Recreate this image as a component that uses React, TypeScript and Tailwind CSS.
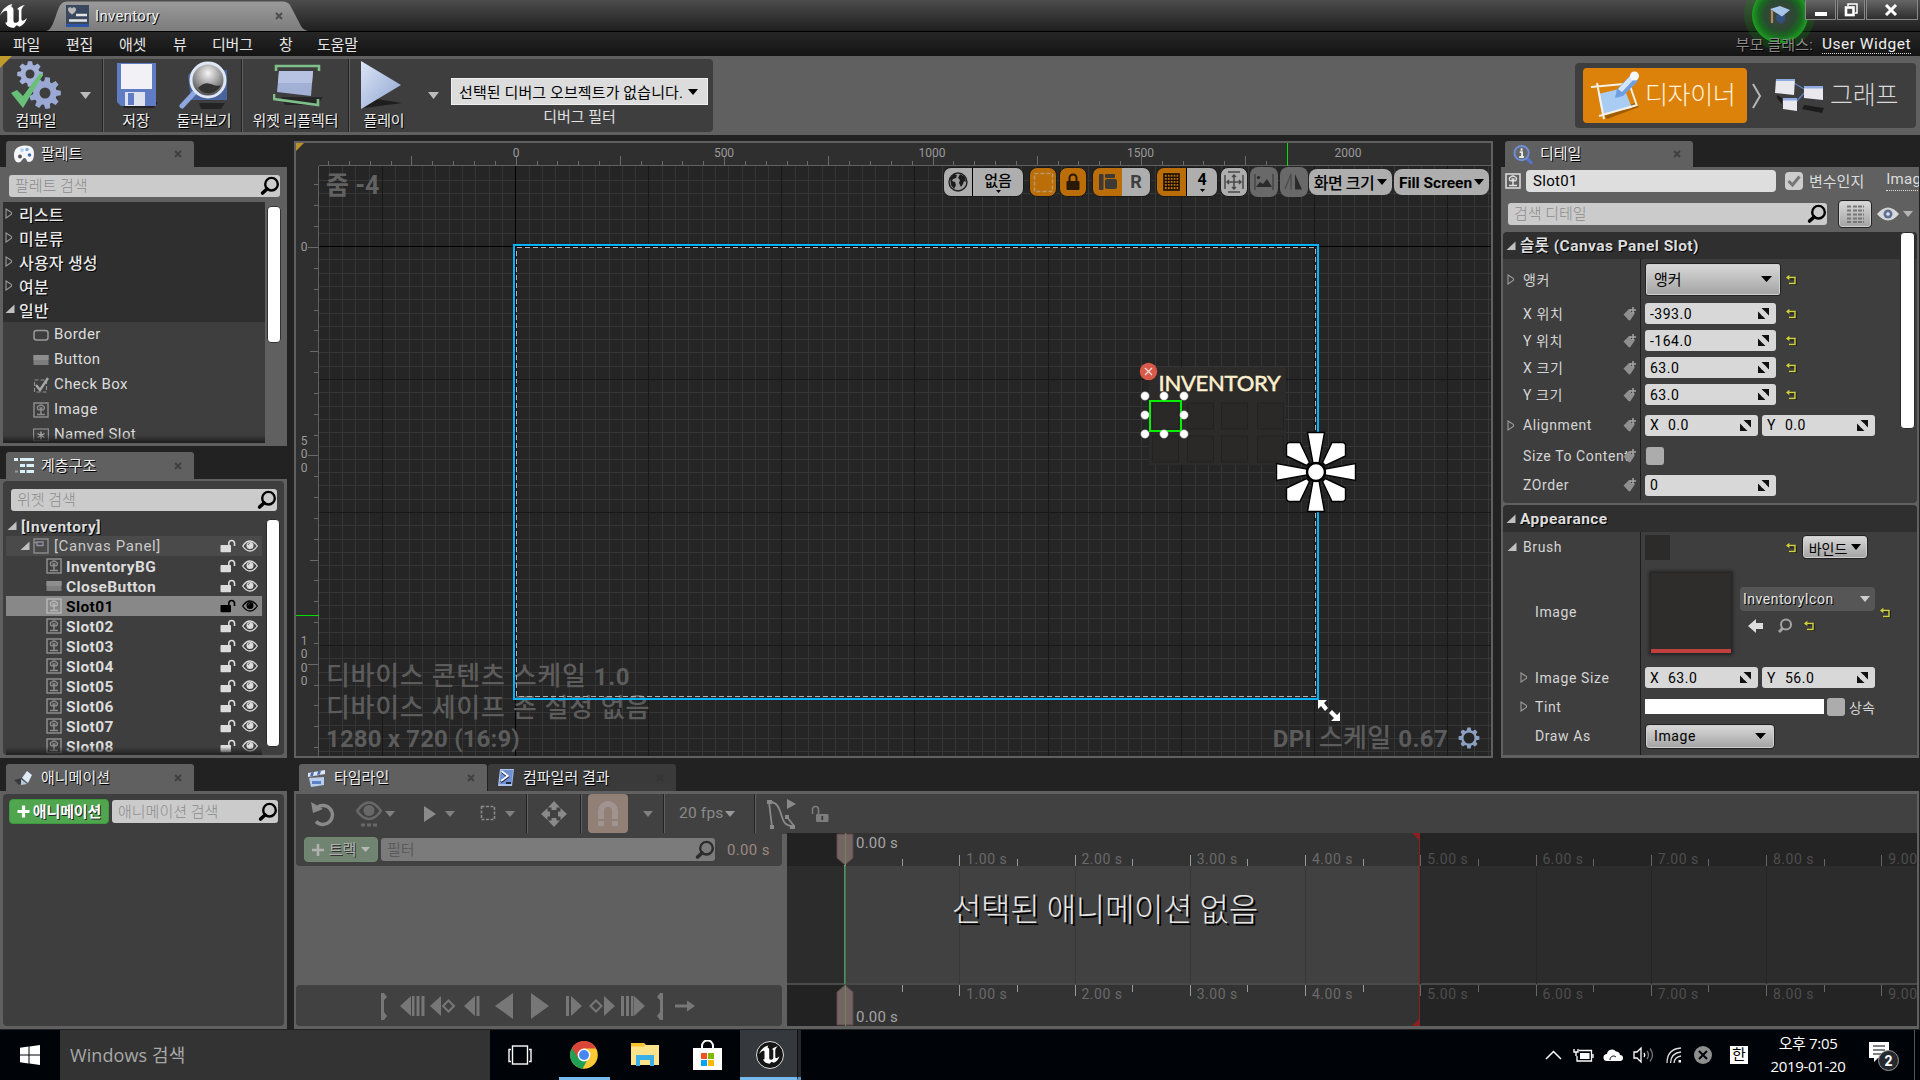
import React from "react";

const SHADOW = "[text-shadow:1px_1px_0_#000]";

/* ---------- small shared pieces ---------- */

function Caret({ className = "text-[#bbb]", w = 10, h = 6 }: { className?: string; w?: number; h?: number }) {
  return (
    <svg width={w} height={h} viewBox="0 0 10 6" preserveAspectRatio="none" className={"shrink-0 " + className}>
      <path d="M0 0h10L5 6z" fill="currentColor" />
    </svg>
  );
}

function SearchIcon({ className = "text-black", size = 20 }: { className?: string; size?: number }) {
  return (
    <svg width={size} height={size} viewBox="0 0 20 20" className={"shrink-0 " + className}>
      <circle cx="11.5" cy="8.2" r="6.3" fill="none" stroke="currentColor" strokeWidth="2.4" />
      <path d="M7 13L2.6 17" stroke="currentColor" strokeWidth="3.6" strokeLinecap="round" />
    </svg>
  );
}

function Search({ text, className }: { text: string; className: string }) {
  return (
    <div className={"flex shrink-0 items-center justify-between rounded-[3px] bg-[#cbcbcb] pl-1.5 pr-0 text-[15px] leading-none text-[#8c8c8c] " + className}>
      <span className="whitespace-nowrap pt-px font-light">{text}</span>
      <SearchIcon />
    </div>
  );
}

function Expander({ open = false }: { open?: boolean }) {
  return open ? (
    <svg width="10" height="10" viewBox="0 0 10 10" className="shrink-0">
      <path d="M9.5 0.5V9H0.5z" fill="#c0c0c0" />
    </svg>
  ) : (
    <svg width="8" height="11" viewBox="0 0 8 11" className="shrink-0">
      <path d="M1 1L6.5 4.6V6.2L1 10z" fill="none" stroke="#9a9a9a" strokeWidth="1.1" />
    </svg>
  );
}

function PanelTab({ icon, label, className = "bg-[#606060]" }: { icon: React.ReactNode; label: string; className?: string }) {
  return (
    <div className={"flex h-full w-[188px] shrink-0 items-center rounded-t-[3px] pl-2 pr-3 " + className}>
      <div className="flex w-5 justify-center">{icon}</div>
      <span className={"ml-[7px] whitespace-nowrap pt-px text-[15px] leading-none text-[#eee] " + SHADOW}>{label}</span>
      <CloseX className="ml-auto" />
    </div>
  );
}

function CloseX({ className = "" }: { className?: string }) {
  return (
    <svg width="8" height="8" viewBox="0 0 8 8" className={className}>
      <path d="M1 1l6 6M7 1l-6 6" stroke="#333" strokeWidth="2" opacity="0.7" />
    </svg>
  );
}

function ImageGlyph({ color = "#8d8d8d" }: { color?: string }) {
  return (
    <svg width="16" height="16" viewBox="0 0 16 16" className="shrink-0">
      <rect x="1" y="1" width="14" height="14" fill="none" stroke={color} strokeWidth="1.5" />
      <path d="M4.5 6.2a1.7 1.7 0 0 1 1.6-2.3 2.5 2.5 0 0 1 3.8 0 1.7 1.7 0 0 1 1.3 2.6 1.5 1.5 0 0 1-2 1.3H6.4a1.5 1.5 0 0 1-1.9-1.6z" fill="none" stroke={color} strokeWidth="1.4" />
      <path d="M6.500 6h3M8 6v6M4 12.5h8" stroke={color} strokeWidth="1.5" />
    </svg>
  );
}

function ButtonGlyph() {
  return (
    <svg width="16" height="16" viewBox="0 0 16 16" className="shrink-0">
      <rect x="0.5" y="3" width="15" height="10" fill="#7d7d7d" />
      <rect x="0.5" y="3" width="15" height="5" fill="#8e8e8e" />
    </svg>
  );
}

function LockOpen({ color }: { color: string }) {
  return (
    <svg width="16" height="14" viewBox="0 0 16 14" className="shrink-0">
      <rect x="0.5" y="6" width="10.5" height="7.2" rx="0.8" fill={color} />
      <path d="M8.8 6V3.8a2.9 2.9 0 0 1 5.7 0V7" fill="none" stroke={color} strokeWidth="1.6" />
    </svg>
  );
}

function Eye({ color }: { color: string }) {
  return (
    <svg width="16" height="12" viewBox="0 0 16 12" className="shrink-0">
      <path d="M0.7 6C3 2.6 5.4 1 8 1s5 1.6 7.3 5C13 9.4 10.6 11 8 11S3 9.4 0.7 6z" fill="none" stroke={color} strokeWidth="1.3" />
      <circle cx="8" cy="5.4" r="3.5" fill={color} />
      <path d="M6.2 5a2 2 0 0 1 1.6-1.7" stroke="#555" strokeWidth="0.9" fill="none" />
    </svg>
  );
}

function ResetArrow({ className = "" }: { className?: string }) {
  return (
    <svg width="11" height="11" viewBox="0 0 11 11" className={"shrink-0 " + className}>
      <path d="M1.5 4.6H9.8V10.6H3.4" fill="none" stroke="#111" strokeWidth="1.6" />
      <path d="M1 3.6H9V9.4H3" fill="none" stroke="#cfd03a" strokeWidth="1.5" />
      <path d="M0 3.6L3.4 0.8V6.2z" fill="#cfd03a" />
    </svg>
  );
}

/* ---------- title bar, menu, toolbar ---------- */

function UnrealMark({ size, className = "" }: { size: number; className?: string }) {
  return (
    <svg width={size} height={size} viewBox="0 0 28 28" className={className}>
      <path
        d="M13 2C8 3 3 7 1 13c2-3 4-4.500 5.500-4.500 1 0 1.500.6 1.500 1.800V18c0 1.600-.8 2-2 1.500C7 23 10.500 25 14.500 25l2.500-2.500L20 24c4-2 6-5 7-8.500-1.500 1.600-3 2.500-4 2.500s-1.300-.7-1.300-2V8.500c0-2 1.300-4 3.300-5.500-3 .6-6 2-7.500 4 1-.2 1.700.4 1.700 1.500V18c-1 1.300-2 2-3.200 2s-2-.8-2-2.200V7.500C14 6 13.500 5 12 4.800 12 3.800 12.300 2.800 13 2z"
        transform="translate(-1 0)"
        fill="#fff"
      />
    </svg>
  );
}

function TitleBar() {
  return (
    <div className="relative flex h-8 shrink-0 border-b border-black bg-[linear-gradient(180deg,#4c4c4c_0%,#3a3a3a_40%,#1f1f1f_100%)]">
      <UnrealMark size={29} className="mt-0.5" />
      <div className="relative ml-[17px] mt-px h-[30px] w-[262px]">
        <svg width="262" height="30" viewBox="0 0 262 30" className="absolute inset-0">
          <defs>
            <linearGradient id="tab" x1="0" y1="0" x2="0" y2="1">
              <stop offset="0" stopColor="#9a9a9a" />
              <stop offset="1" stopColor="#7c7c7c" />
            </linearGradient>
          </defs>
          <path d="M0 30C9 29 10 5 17 1.500Q19 .5 22 .5H236Q242 .5 244 4L255 25Q257 29 262 30z" fill="url(#tab)" />
        </svg>
        <div className="relative flex h-full items-center pl-[20px]">
          <svg width="23" height="22" viewBox="0 0 23 22">
            <rect width="23" height="22" fill="#39475f" />
            <rect y="19" width="23" height="3" fill="#2c55a5" />
            <path d="M2 4.500C2 2 5 1.500 6 3.800 7 1.500 10 2 10 4.500 10 7 6 9.500 6 9.500S2 7 2 4.500z" fill="#b9b9b9" />
            <path d="M10 10h11M3 15.500h18" stroke="#e4e4e4" strokeWidth="2.600" />
          </svg>
          <span className={"ml-1.5 text-[15px] leading-none tracking-[0.300px] text-[#eee] " + SHADOW}>Inventory</span>
          <CloseX className="absolute left-[229px] top-[11px]" />
        </div>
      </div>
      <div className="absolute left-[1744px] top-0 h-[52px] w-[71px] overflow-hidden">
        <div className="absolute -top-[21px] left-0 size-[71px] rounded-full bg-[#00a000]/20" />
        <div className="absolute -top-[13px] left-2 size-[56px] rounded-full border border-[#1fa01f] bg-[radial-gradient(circle,#3c443e_15%,#2a4a30_40%,#1a6a20_56%,#1c9422_70%)]" />
        <svg width="22" height="20" viewBox="0 0 22 20" className="absolute left-[25px] top-[5px]">
          <path d="M7 10v5l5 4 4-3.500V9z" fill="#34507c" />
          <path d="M1 4L11 1l10 4-8 6.500z" fill="#a8c6ea" />
          <path d="M3 5v13" stroke="#b08a58" strokeWidth="2.200" />
        </svg>
      </div>
      <div className="absolute right-[2px] top-0 flex h-[20px] gap-px">
        <div className="flex w-[31px] items-center justify-center border border-t-0 border-[#888] bg-[linear-gradient(#666,#2e2e2e)]">
          <div className="mt-2 h-1 w-3 bg-white" />
        </div>
        <div className="flex w-[28px] items-center justify-center border border-t-0 border-[#888] bg-[linear-gradient(#666,#2e2e2e)]">
          <svg width="14" height="14" viewBox="0 0 14 14">
            <path d="M4 3V1h9v9h-2" fill="none" stroke="#fff" strokeWidth="1.500" />
            <rect x="2" y="4.500" width="7.500" height="7.500" fill="none" stroke="#fff" strokeWidth="2.600" />
          </svg>
        </div>
        <div className="flex w-[52px] items-center justify-center border border-t-0 border-[#888] bg-[linear-gradient(#666,#2e2e2e)]">
          <svg width="14" height="12" viewBox="0 0 14 12" className="mr-0.5">
            <path d="M2 1l10 10M12 1L2 11" stroke="#fff" strokeWidth="3" />
          </svg>
        </div>
      </div>
    </div>
  );
}

function MenuBar() {
  return (
    <div className="flex h-6 shrink-0 items-center bg-[linear-gradient(#262626,#141414)] pl-[13px] pr-[9px] pt-0.5 text-[15px] leading-none tracking-[-0.2px] text-[#e6e6e6]">
      <span className="w-[53px]">파일</span>
      <span className="w-[53px]">편집</span>
      <span className="w-[54px]">애셋</span>
      <span className="w-[39px]">뷰</span>
      <span className="w-[67px]">디버그</span>
      <span className="w-[38px]">창</span>
      <span>도움말</span>
      <span className={"relative z-10 ml-auto mr-[9px] tracking-[0.1px] text-[#8a8a8a] " + SHADOW}>부모 클래스:</span>
      <span className="border-b border-dotted border-[#ddd] text-[15.500px] leading-[17px] tracking-[0.500px] text-[#eee]">User Widget</span>
    </div>
  );
}

const gear = (cx: number, cy: number, r: number, teeth: number) => {
  const pts: string[] = [];
  for (let i = 0; i < teeth; i++) {
    const a = (i / teeth) * Math.PI * 2;
    const s = Math.PI / teeth;
    [[-0.75, 0.74], [-0.42, 1], [0.42, 1], [0.75, 0.74]].forEach(([k, m]) => {
      pts.push((cx + Math.cos(a + s * k) * r * m).toFixed(1) + "," + (cy + Math.sin(a + s * k) * r * m).toFixed(1));
    });
  }
  return pts.join(" ");
};

function ToolItem({ label, className, children }: { label: string; className: string; children: React.ReactNode }) {
  return (
    <div className={"flex shrink-0 flex-col items-center " + className}>
      <div className="flex h-[52px] items-center">{children}</div>
      <span className={"mt-[3px] whitespace-nowrap text-[15px] leading-none tracking-[-0.1px] text-[#eee] " + SHADOW}>{label}</span>
    </div>
  );
}

function Sep({ className = "" }: { className?: string }) {
  return <div className={"h-full w-0.5 shrink-0 border-l border-[#222] bg-[#606060] " + className} />;
}

function Toolbar() {
  return (
    <div className="flex h-[79px] shrink-0 bg-[#606060]">
      <div className="relative mt-[3px] h-[73px] w-[713px] pl-[3px]">
        <svg width="12" height="12" className="absolute left-0 -top-[3px] z-10">
          <path d="M0 0h12L0 12z" fill="#c09a2a" />
        </svg>
        <div className="flex h-full rounded-[4px] bg-[#3e3e3e]">
          <ToolItem label="컴파일" className="w-[66px]">
            <svg width="50" height="50" viewBox="0 0 50 50">
              <polygon points={gear(19, 14, 13, 8)} fill="#a3b0d8" />
              <circle cx="19" cy="14" r="4.500" fill="#3e3e3e" />
              <polygon points={gear(34, 33, 16, 9)} fill="#9aa8d4" />
              <circle cx="34" cy="33" r="5.500" fill="#3e3e3e" />
              <path d="M0 33l6-3 6 6L29 13l3 2-20 33z" fill="#68c078" />
            </svg>
          </ToolItem>
          <div className="mt-[33px] w-[33px] pl-[11px]"><Caret w={11} h={7} /></div>
          <Sep />
          <ToolItem label="저장" className="w-[63px] pl-px">
            <svg width="44" height="46" viewBox="0 0 44 46" className="ml-[3px]">
              <path d="M6 40h36l-4 6H8z" fill="#222" />
              <path d="M1 1h39v43H5L1 40z" fill="#5f7cc4" />
              <rect x="5" y="2" width="31" height="25" fill="#f2f2f6" />
              <rect x="9" y="30" width="20" height="14" fill="#dfe3ee" />
              <rect x="12" y="31" width="6" height="12" fill="#5f7cc4" />
            </svg>
          </ToolItem>
          <ToolItem label="둘러보기" className="w-[74px]">
            <svg width="50" height="48" viewBox="0 0 50 48">
              <defs>
                <radialGradient id="lens" cx="0.500" cy="0.300" r="0.700">
                  <stop offset="0" stopColor="#f5f5f5" />
                  <stop offset="0.600" stopColor="#8d8d8d" />
                  <stop offset="1" stopColor="#444" />
                </radialGradient>
              </defs>
              <path d="M20 42h26l-4 6H22z" fill="#242424" />
              <path d="M9 14l6-5h33v30H12z" fill="#49639d" />
              <path d="M16 31L3 45" stroke="#8fa7e0" strokeWidth="5" strokeLinecap="round" />
              <circle cx="29" cy="19" r="17" fill="url(#lens)" stroke="#dfe6f5" strokeWidth="3" />
              <path d="M19 27c6 8 18 7 23-3-8 4-12-8-23 3z" fill="#333" />
            </svg>
          </ToolItem>
          <Sep />
          <ToolItem label="위젯 리플렉터" className="w-[105px]">
            <svg width="50" height="44" viewBox="0 0 50 44" className="ml-1">
              <path d="M8 34h42l-6 8H12z" fill="#262626" />
              <path d="M3 8V3h43v5M1 31l0 5 44 6v-6" fill="none" stroke="#7fbf8a" strokeWidth="2.600" />
              <path d="M6 8l34 0-2 25-34-4z" fill="#a3b0d6" />
              <path d="M6 8l34 0-1 12-34 0z" fill="#b7c2e2" />
            </svg>
          </ToolItem>
          <Sep />
          <ToolItem label="플레이" className="w-[67px] pl-px">
            <svg width="46" height="50" viewBox="0 0 46 50" className="mr-[7px]">
              <path d="M6 48l12-9 26 4z" fill="#1e1e1e" />
              <defs>
                <linearGradient id="play" x1="0" y1="0" x2="1" y2="1">
                  <stop offset="0" stopColor="#dbe6f7" />
                  <stop offset="1" stopColor="#8fa3cf" />
                </linearGradient>
              </defs>
              <path d="M3 1l40 24L3 49z" fill="url(#play)" />
            </svg>
          </ToolItem>
          <div className="mt-[33px] w-[33px] pl-[11px]"><Caret w={11} h={7} /></div>
          <div className="ml-px flex w-[257px] flex-col items-center pt-[19px]">
            <div className="flex h-[27px] w-full items-center justify-between border border-[#efefef] bg-[#dcdcdc] pl-[7px] pr-[9px] text-[15px] leading-none tracking-[0.1px] text-black">
              <span className="whitespace-nowrap pt-[3px]">선택된 디버그 오브젝트가 없습니다.</span>
              <Caret className="text-black" />
            </div>
            <span className="mt-[5px] text-[15px] leading-none text-[#e0e0e0]">디버그 필터</span>
          </div>
        </div>
      </div>
      <div className="ml-auto mr-1 mt-[7px] flex h-[65px] w-[341px] items-center rounded-[4px] bg-[#3e3e3e] pl-2">
        <div className="flex h-[55px] w-[164px] items-center rounded-sm bg-[#dc820b] pl-1.5">
          <svg width="52" height="50" viewBox="0 0 52 50">
            <path d="M14 44l32-12 4 4-32 12z" fill="#a05c00" />
            <path d="M9 23l26-6 8 20-30 6z" fill="#a9cdf2" />
            <path d="M2 16l44-4M8 12l7 36M10 45l38-11M40 12l8 23" fill="none" stroke="#f6f1e6" strokeWidth="2" />
            <path d="M26 27l2-9L42 4l7 6-15 15z" fill="#6f9ee2" />
            <path d="M29 18L43 3l4 3-14 15z" fill="#d4e6fb" />
            <circle cx="45.500" cy="5" r="4.500" fill="#f4f8ff" />
          </svg>
          <span className="ml-1 whitespace-nowrap text-[25px] font-light leading-none tracking-[-0.400px] text-[#fff3df]">디자이너</span>
        </div>
        <svg width="12" height="26" viewBox="0 0 12 26" className="ml-1">
          <path d="M2 1l7 12-7 12" fill="none" stroke="#b8b8b8" strokeWidth="2" />
        </svg>
        <svg width="52" height="36" viewBox="0 0 52 36" className="ml-[11px]">
          <path d="M30 27l20 3-2 5-20-4zM3 17l5 3v6l-5-6z" fill="#1c1c1c" />
          <path d="M20 5l10 6M22 24l9-10" stroke="#5c7fc0" strokeWidth="1.400" />
          <path d="M2 1h19l-1 16-19-2zM30 9h19v13l-19-2zM9 20l14 0 0 13-14-2z" fill="#e8e8ee" />
          <path d="M2 1h19v2H2zM30 8h19v2.500H30zM9 20h14v2.500H9z" fill="#8fabe0" />
        </svg>
        <span className="ml-1 whitespace-nowrap text-[25px] font-light leading-none tracking-[-0.200px] text-[#d8d8d8]">그래프</span>
      </div>
    </div>
  );
}

/* ---------- left column ---------- */

function PaletteGlyph() {
  return (
    <svg width="20" height="18" viewBox="0 0 20 18">
      <path d="M0 10C0 4 4 .5 11 .5s9 3 9 8.500c0 5-2 8-5 8S13 13 10.500 13 8 17.500 4.500 17.500C1.500 17.500 0 14 0 10z" fill="#f4f6fa" />
      <circle cx="6" cy="11.500" r="2" fill="#555" />
      <circle cx="8" cy="5" r="2" fill="#b9d4f2" />
      <circle cx="13" cy="4.500" r="1.800" fill="#7faee6" />
      <circle cx="15.500" cy="10" r="1.800" fill="#3f6fae" />
    </svg>
  );
}

function PaletteItem({ icon, label }: { icon: React.ReactNode; label: string }) {
  return (
    <div className="flex h-[25px] shrink-0 items-center gap-[5px] pl-[30px] text-[15px] tracking-[0.400px] text-[#dcdcdc]">
      {icon}
      <span>{label}</span>
    </div>
  );
}

function Palette() {
  return (
    <>
      <div className="flex h-[26px] shrink-0 pl-1.5">
        <PanelTab icon={<PaletteGlyph />} label="팔레트" />
      </div>
      <div className="flex h-[279px] shrink-0 flex-col bg-[#606060] px-[3px] pb-[3px] pt-2">
        <Search text="팔레트 검색" className="ml-[6px] h-[22px] w-[271px]" />
        <div className="mt-[5px] flex min-h-0 flex-1">
          <div className="relative w-[262px] overflow-hidden bg-[#3e3e3e]">
            <div className="bg-[#2f2f2f]">
              {["리스트", "미분류", "사용자 생성", "여분", "일반"].map((t, i) => (
                <div key={t} className="flex h-6 items-center">
                  <div className="-mt-0.5 flex w-4 pl-[2px]"><Expander open={i === 4} /></div>
                  <span className={"pt-[3px] text-[16px] font-medium leading-none tracking-[0.200px] text-[#e8e8e8] " + SHADOW}>{t}</span>
                </div>
              ))}
            </div>
            <PaletteItem
              label="Border"
              icon={<svg width="16" height="16" viewBox="0 0 16 16"><rect x="1" y="3.500" width="14" height="9.500" rx="2.500" fill="none" stroke="#9a9a9a" strokeWidth="1.500" /></svg>}
            />
            <PaletteItem label="Button" icon={<ButtonGlyph />} />
            <PaletteItem
              label="Check Box"
              icon={
                <svg width="16" height="16" viewBox="0 0 16 16">
                  <rect x="1.500" y="3" width="12" height="12" fill="none" stroke="#8d8d8d" strokeWidth="1.200" strokeDasharray="4 2" />
                  <path d="M3 8l4 5 8-12" fill="none" stroke="#a8a8a8" strokeWidth="2.300" />
                </svg>
              }
            />
            <PaletteItem label="Image" icon={<ImageGlyph />} />
            <PaletteItem
              label="Named Slot"
              icon={
                <svg width="16" height="16" viewBox="0 0 16 16">
                  <rect x="0.600" y="2" width="14.800" height="12" fill="none" stroke="#8d8d8d" strokeWidth="1.200" />
                  <path d="M8 4.500v8M4.500 6.500l7 4M11.500 6.500l-7 4" stroke="#a8a8a8" strokeWidth="1.400" />
                </svg>
              }
            />
            <div className="absolute inset-x-0 bottom-0 h-2 bg-[linear-gradient(transparent,#1c1c1c)]" />
          </div>
          <div className="ml-[2px] mt-1 h-[137px] w-[14px] rounded-sm border border-[#333] bg-white" />
        </div>
      </div>
    </>
  );
}

function TreeRow({ name, selected = false, glyph }: { name: string; selected?: boolean; glyph?: React.ReactNode }) {
  const c = selected ? "#000" : "#dcdcdc";
  return (
    <div className={"flex h-5 shrink-0 items-center pl-10 " + (selected ? "bg-[#888] text-black" : "text-[#dcdcdc]")}>
      {glyph ?? <ImageGlyph color={selected ? "#b5b5b5" : "#8d8d8d"} />}
      <span className="ml-1 flex-1 pt-[3px] text-[15.500px] font-bold leading-none tracking-[0.400px]">{name}</span>
      <LockOpen color={c} />
      <div className="ml-1.5 mr-1"><Eye color={c} /></div>
    </div>
  );
}

function Hierarchy() {
  return (
    <>
      <div className="mt-1.5 flex h-[27px] shrink-0 pl-1.5">
        <PanelTab
          label="계층구조"
          icon={
            <svg width="20" height="17" viewBox="0 0 20 17">
              <path d="M0 2.500h4M6 2.500h14M6 8.500h5M12.500 8.500H20M6 14.500h5M12.500 14.500H20" stroke="#d9f0f6" strokeWidth="3" />
              <path d="M1 14.500h3" stroke="#999" strokeWidth="2" />
            </svg>
          }
        />
      </div>
      <div className="h-[279px] shrink-0 bg-[#606060] px-[3px] pb-[3px] pt-0.5">
        <div className="flex h-full flex-col rounded bg-[#3e3e3e] pt-2">
          <Search text="위젯 검색" className="ml-[8px] h-[22px] w-[266px]" />
          <div className="flex min-h-0 flex-1 pl-[3px] pt-[5px]">
            <div className="relative flex w-[256px] flex-col overflow-hidden">
              <div className="flex h-5 shrink-0 items-center pl-px">
                <Expander open />
                <span className={"ml-1 pt-[3px] text-[15.500px] font-bold leading-none tracking-[0.550px] text-[#dedede] " + SHADOW}>[Inventory]</span>
              </div>
              <div className="flex h-5 shrink-0 items-center bg-[#4a4a4a] pl-[14px]">
                <Expander open />
                <svg width="16" height="16" viewBox="0 0 16 16" className="ml-[3px]">
                  <rect x="1" y="1" width="14" height="14" fill="none" stroke="#8d8d8d" strokeWidth="1.400" />
                  <path d="M1 4.500h3M4 4h6v3.500H4z" fill="none" stroke="#8d8d9d" strokeWidth="1.400" />
                </svg>
                <span className="ml-[5px] flex-1 text-[15px] leading-none tracking-[0.600px] text-[#c9c9c9]">[Canvas Panel]</span>
                <LockOpen color="#dcdcdc" />
                <div className="ml-1.5 mr-1"><Eye color="#dcdcdc" /></div>
              </div>
              <TreeRow name="InventoryBG" />
              <TreeRow name="CloseButton" glyph={<ButtonGlyph />} />
              <TreeRow name="Slot01" selected />
              <TreeRow name="Slot02" />
              <TreeRow name="Slot03" />
              <TreeRow name="Slot04" />
              <TreeRow name="Slot05" />
              <TreeRow name="Slot06" />
              <TreeRow name="Slot07" />
              <TreeRow name="Slot08" />
              <div className="absolute inset-x-0 bottom-0 h-2 bg-[linear-gradient(transparent,#222)]" />
            </div>
            <div className="ml-1 mt-[3px] h-[228px] w-[14px] rounded-sm border border-[#2a2a2a] bg-white" />
          </div>
        </div>
      </div>
    </>
  );
}

/* ---------- designer canvas ---------- */

const range = (n: number, from = 0) => Array.from({ length: n }, (_, i) => i + from);

/* Coordinates below are relative to the canvas frame's inner box. */
function Grid() {
  return (
    <svg width="1196" height="613" className="absolute inset-0">
      <rect width="1196" height="613" fill="#2f2f2f" />
      <rect x="23" y="23" width="1173" height="590" fill="#252525" />
      <g shapeRendering="crispEdges">
        {range(89, -14).map((i) => {
          const x = Math.round(219.3 + i * 13.32);
          return x > 23 && i % 10 !== 0 ? <path key={"x" + i} d={`M${x}.5 23V613`} stroke="#363636" /> : null;
        })}
        {range(45, -5).map((i) => {
          const y = Math.round(103 + i * 13.3);
          return y > 23 && i % 10 !== 0 ? <path key={"y" + i} d={`M23 ${y}.5H1196`} stroke="#363636" /> : null;
        })}
        {range(9, -1).map((i) => (
          <path key={"mx" + i} d={`M${Math.round(218.700 + i * 133.2)}.5 23V613`} stroke={i === 0 ? "#000" : "#171717"} />
        ))}
        {range(4).map((i) => (
          <path key={"my" + i} d={`M23 ${Math.round(103 + i * 133)}.5H1196`} stroke={i === 0 ? "#000" : "#171717"} />
        ))}
        <path d="M23 22.500H1196M22.500 23V613" stroke="#606060" />
        {range(47, -9).map((i) => {
          const x = Math.round(219.700 + i * 20.84);
          const h = i % 5 === 0 ? 9 : 4;
          return x > 23 ? <path key={"tx" + i} d={`M${x}.5 ${22 - h}V22`} stroke="#6a6a6a" /> : null;
        })}
        {range(28, -3).map((i) => {
          const y = Math.round(104 + i * 20.84);
          const w = i % 10 === 0 ? 10 : i % 5 === 0 ? 8 : 4;
          return y > 23 ? <path key={"ty" + i} d={`M${22 - w} ${y}.5H22`} stroke="#6a6a6a" /> : null;
        })}
        <path d="M991.500 0V23" stroke="#00e000" />
        <path d="M0 472.500H23" stroke="#00e000" />
      </g>
    </svg>
  );
}

function Overlay() {
  return (
    <svg width="1196" height="613" className="absolute inset-0">
      <rect x="220.500" y="104.500" width="799" height="449" fill="none" stroke="#b0b0b0" strokeDasharray="5 3" shapeRendering="crispEdges" />
      <rect x="218" y="102" width="804" height="454" fill="none" stroke="#00b4f8" strokeWidth="2" shapeRendering="crispEdges" />
      <rect x="853" y="224" width="137" height="98" fill="#2d2b29" />
      {[259.500, 292.500].map((y) =>
        [856.500, 891.500, 925.500, 961.500].map((x) => (
          <rect key={x + "-" + y} x={x} y={y + 0.500} width="26" height="26" fill="#2b2927" stroke="#242220" />
        ))
      )}
      <circle cx="852.500" cy="228.500" r="8.700" fill="#d9594a" />
      <path d="M849 225l7 7M856 225l-7 7" stroke="#f3e4dc" strokeWidth="1.200" />
      <rect x="854" y="258" width="31" height="30" fill="none" stroke="#00f000" strokeWidth="2" />
      {[[849, 253], [868, 253], [888, 253], [849, 272], [888, 272], [849, 291], [868, 291], [888, 291]].map(([x, y]) => (
        <circle key={x + "," + y} cx={x} cy={y} r="4.200" fill="#fff" stroke="#999" strokeWidth="0.500" />
      ))}
      <g transform="translate(1020 329)" fill="#fff" stroke="#000" strokeWidth="1.400">
        {range(4).map((i) => (
          <g key={i} transform={`rotate(${i * 90})`}>
            <path d="M-8.500 -39.500H8.500L3 -9H-3z" />
            <path d="M6.500 -9.500L16 -29.500H27.500L29.500 -27.500V-16L9.500 -6.500z" />
          </g>
        ))}
        <circle r="9" strokeWidth="2.400" />
      </g>
      <g transform="translate(1022 557)" fill="#fff">
        <path d="M0 0h9L6 3l4 5-3 3-4-5-3 3zM22 21h-9l3-3-5-5 3-3 5 5 3-3z" />
      </g>
    </svg>
  );
}

const LIGHT = "bg-[#aeaeae]";
const AMBER = "bg-[#bb6d08]";

function CanvasTools() {
  return (
    <div className="absolute left-[648px] top-6 flex h-[30px] items-center text-black">
      <div className="-ml-px flex h-[30px] w-[81px] overflow-hidden rounded-[8px] border border-[#1a1a1a]">
        <div className={"flex w-[29px] items-center justify-center border-r border-black " + LIGHT}>
          <svg width="20" height="20" viewBox="0 0 20 20">
            <circle cx="10" cy="10" r="9" fill="#9d9d9d" stroke="#222" strokeWidth="1.400" />
            <path d="M2 6l4-4 3 1-1 3-3 1-1 2 3 1 1 3-2 4-3-4zM12 2l5 3 1 5-2-1-1 3-2 3-2-4 1-3-2-2z" fill="#1c1c1c" />
          </svg>
        </div>
        <div className={"flex flex-1 flex-col items-center justify-center pt-0.5 " + LIGHT}>
          <span className="text-[15px] font-medium leading-[15px] tracking-[-0.100px]">없음</span>
          <Caret className="mt-px text-black" w={5} h={3} />
        </div>
      </div>
      <div className={"ml-[5px] flex h-[30px] w-[28px] items-center justify-center rounded-[8px] border border-[#1a1a1a] " + AMBER}>
        <svg width="21" height="21"><rect x="1.500" y="1.500" width="18" height="18" fill="none" stroke="#b79a6c" strokeWidth="1.500" strokeDasharray="4 2" /></svg>
      </div>
      <div className={"ml-0.5 flex h-[30px] w-[28px] items-center justify-center rounded-[8px] border border-[#1a1a1a] " + AMBER}>
        <svg width="14" height="18" viewBox="0 0 14 18">
          <rect x="0.500" y="8" width="13" height="9" rx="1" fill="#2a1a05" />
          <path d="M3.500 8V5a3.500 3.500 0 0 1 7 0v3" fill="none" stroke="#2a1a05" strokeWidth="2" />
        </svg>
      </div>
      <div className="ml-[5px] flex h-[30px] w-[59px] overflow-hidden rounded-[8px] border border-[#1a1a1a]">
        <div className={"flex w-[29px] items-center justify-center " + AMBER}>
          <svg width="18" height="16" viewBox="0 0 18 16" fill="#3d3a36">
            <rect x="0" y="0" width="4.500" height="16" rx="1" />
            <rect x="6" y="0" width="10" height="4" rx="1" />
            <rect x="6" y="5" width="12" height="10" rx="2" />
          </svg>
        </div>
        <div className={"flex flex-1 items-center justify-center text-[18px] font-bold leading-none text-[#3e3e3e] " + LIGHT}>R</div>
      </div>
      <div className="ml-[5px] flex h-[30px] w-[62px] overflow-hidden rounded-[8px] border border-[#1a1a1a]">
        <div className={"flex w-[30px] items-center justify-center border-r border-black " + AMBER}>
          <svg width="17" height="18" viewBox="0 0 17 18" fill="none" stroke="#1a0f00">
            <path d="M4.300 1v16M7.200 1v16M10.100 1v16M13 1v16M1 4.400h15M1 7.400h15M1 10.400h15M1 13.400h15" strokeWidth="1.100" />
            <rect x="1" y="1" width="15" height="16" strokeWidth="1.600" />
          </svg>
        </div>
        <div className={"flex flex-1 flex-col items-center justify-center " + LIGHT}>
          <span className="text-[16px] font-bold leading-[15px]">4</span>
          <Caret className="mt-0.5 text-black" w={5} h={3} />
        </div>
      </div>
      <div className={"ml-[2px] flex h-[30px] w-[28px] items-center justify-center rounded-[8px] border border-[#1a1a1a] " + LIGHT}>
        <svg width="22" height="22" viewBox="0 0 22 22" fill="none" stroke="#4a4a4a" strokeWidth="1.500">
          <path d="M2 4v14M20 4v14M5 1h12M5 21h12M11 4v14M4 11h14M9 6l2-2 2 2M9 16l2 2 2-2M6 9l-2 2 2 2M16 9l2 2-2 2" />
        </svg>
      </div>
      <div className="ml-0.5 flex h-[30px] w-[28px] items-center justify-center rounded-[8px] bg-[#696969]">
        <svg width="20" height="16" viewBox="0 0 20 16">
          <path d="M1 0v16M19 0v16" stroke="#3c3c3c" strokeWidth="1.200" />
          <path d="M2 13l4-5 3 2 4-5 5 8z" fill="#2a2a2a" />
          <circle cx="4.500" cy="3.500" r="1.600" fill="#2a2a2a" />
        </svg>
      </div>
      <div className="ml-0.5 flex h-[30px] w-[28px] items-center justify-center rounded-[8px] bg-[#696969]">
        <svg width="20" height="18" viewBox="0 0 20 18">
          <path d="M7 1L1 16M7 1v15.500" fill="none" stroke="#4a4a4a" strokeWidth="1.300" />
          <path d="M11 1l7 15.500h-7z" fill="#2a2a2a" />
        </svg>
      </div>
      <div className={"ml-px flex h-[26px] w-[83px] items-center justify-center gap-[3px] rounded-[8px] text-[16px] font-medium leading-none tracking-[-0.500px] " + LIGHT}>
        <span className="whitespace-nowrap pt-[3px]">화면 크기</span>
        <Caret className="text-black" />
      </div>
      <div className={"ml-0.5 flex h-[26px] w-[95px] items-center justify-center gap-0.5 rounded-[8px] text-[15.500px] font-bold leading-none " + LIGHT}>
        <span className="whitespace-nowrap pt-[3px]">Fill Screen</span>
        <Caret className="text-black" />
      </div>
    </div>
  );
}

function Designer() {
  return (
    <div className="relative ml-[7px] h-[617px] w-[1199px] shrink-0 overflow-hidden border-2 border-[#606060]">
      <Grid />
      <svg width="12" height="12" className="absolute -left-0.5 -top-0.5"><path d="M0 0h12L0 12z" fill="#b8922a" /></svg>
      {[[220, "0"], [428, "500"], [636, "1000"], [844.500, "1500"], [1052, "2000"]].map(([x, t]) => (
        <span key={t} className="absolute top-1 -translate-x-1/2 text-[12px] leading-none text-[#9a9a9a]" style={{ left: x }}>{t}</span>
      ))}
      {[[98, "0"], [292, "500"], [492, "1000"]].map(([y, t]) => (
        <span key={t} className="absolute left-[4px] w-2 break-all text-center text-[12px] leading-[13.300px] text-[#9a9a9a]" style={{ top: y }}>{t}</span>
      ))}
      <div className="absolute left-[30px] top-[30px] text-[25px] font-bold leading-none text-[#626262]">줌 -4</div>
      <div className="absolute bottom-px left-[30px] whitespace-nowrap text-[26px] font-medium leading-[31px] text-[#5c5c5c]">
        <div className="tracking-[0.700px]">디바이스 콘텐츠 스케일 <span className="text-[24px] font-bold">1.0</span></div>
        <div className="tracking-[0.700px]">디바이스 세이프 존 설정 없음</div>
        <div className="text-[24px] font-bold tracking-[0.150px]">1280 x 720 (16:9)</div>
      </div>
      <div className="absolute bottom-px right-[43px] whitespace-nowrap text-[26px] font-medium leading-[31px] tracking-[0.350px] text-[#5c5c5c]">
        <span className="text-[24px] font-bold">DPI</span> 스케일 <span className="text-[24px] font-bold">0.67</span>
      </div>
      <svg width="22" height="22" viewBox="0 0 22 22" className="absolute bottom-[7px] right-[11px]">
        <polygon points={gear(11, 11, 10.5, 8)} fill="#8b9fc0" />
        <circle cx="11" cy="11" r="5.500" fill="#252525" />
      </svg>
      <Overlay />
      <div className="absolute left-[862.500px] top-[227.500px] font-['Lato'] text-[22px] leading-[24px] tracking-[-0.250px] text-[#fdf0d0] [-webkit-text-stroke:0.500px_#fdf0d0]">INVENTORY</div>
      <CanvasTools />
    </div>
  );
}

/* ---------- details ---------- */

function Spin({ axis, value, className }: { axis?: string; value: string; className: string }) {
  return (
    <div className={"flex h-[21px] shrink-0 items-center rounded-[3px] bg-[#d8d8d8] pl-[5px] pr-[7px] text-[14px] leading-none tracking-[0.500px] text-black " + className}>
      {axis ? <span className="w-[18px] tracking-normal">{axis}</span> : null}
      <span className="flex-1">{value}</span>
      <svg width="11" height="11" viewBox="0 0 11 11">
        <path d="M3.500 0H11v7.500zM0 3.500V11h7.500z" fill="#111" />
        <path d="M6 3.500l1.500 1.500M3.500 6L5 7.500" stroke="#d8d8d8" strokeWidth="1.500" />
      </svg>
    </div>
  );
}

function Tag() {
  return (
    <svg width="13" height="14" viewBox="0 0 13 14" className="-ml-4 mr-1 shrink-0">
      <path d="M0.500 7.500L6 2h2v3h3.500v2L7 13.500 5.500 13z" fill="#8f8f8f" />
      <path d="M10 0v6M7 3h6" stroke="#a5a5a5" strokeWidth="1.500" />
    </svg>
  );
}

function PropRow({ label, expander, tag, h, indent = 0, children }: { label: string; expander?: "open" | "closed"; tag?: boolean; h: string; indent?: 0 | 1; children?: React.ReactNode }) {
  return (
    <div className={"flex shrink-0 items-stretch " + h}>
      <div className="flex w-[138px] shrink-0 items-center border-r border-[#1c1c1c]">
        <div className={"flex shrink-0 " + (indent ? "w-8 pl-[17px]" : "w-5 pl-1")}>
          {expander ? <Expander open={expander === "open"} /> : null}
        </div>
        <span className="flex-1 whitespace-nowrap text-[14px] leading-none tracking-[0.600px] text-[#d5d5d5]">{label}</span>
        {tag ? <Tag /> : null}
      </div>
      <div className="flex items-center pl-1">{children}</div>
    </div>
  );
}

const SILVER = "bg-[linear-gradient(#dadada,#a2a2a2)] border border-[#222] shadow-[inset_0_0_0_1px_#cfcfcf]";

function SectionHead({ title }: { title: string }) {
  return (
    <div className="flex h-[27px] shrink-0 items-center rounded-t bg-[#2f2f2f] pl-[3px]">
      <Expander open />
      <span className={"ml-1 pt-0.5 text-[15.500px] font-bold leading-none tracking-[0.450px] text-[#dedede] " + SHADOW}>{title}</span>
    </div>
  );
}

function Details() {
  return (
    <div className="ml-2 flex w-[418px] shrink-0 flex-col">
      <div className="flex h-[26px] shrink-0 pl-[4px]">
        <PanelTab
          label="디테일"
          icon={
            <svg width="21" height="21" viewBox="0 0 21 21">
              <path d="M15 15l4 4" stroke="#5575c4" strokeWidth="3.500" strokeLinecap="round" />
              <circle cx="9" cy="9" r="7.500" fill="#666" stroke="#6e8fd8" strokeWidth="2" />
              <path d="M9 4v2.500M7 8h2.500v5M6.500 13.200h5" stroke="#e8e8e8" strokeWidth="2" fill="none" />
            </svg>
          }
        />
      </div>
      <div className="relative flex h-[591px] flex-col overflow-hidden bg-[#606060] pl-[2px] pr-0.5">
        <div className="flex h-7 shrink-0 items-center pl-[2px]">
          <ImageGlyph color="#e0e0e0" />
          <div className="ml-[5px] flex h-[22px] w-[250px] shrink-0 items-center rounded-[4px] bg-[#dedede] pl-[7px] text-[15px] leading-none tracking-[0.300px] text-black">Slot01</div>
          <div className="ml-[9px] flex size-[18px] shrink-0 items-center justify-center rounded-sm bg-[#cdcdcd]">
            <svg width="14" height="12" viewBox="0 0 14 12"><path d="M1.500 6l4 4L12.500 1.500" fill="none" stroke="#777" strokeWidth="3" /></svg>
          </div>
          <span className="ml-1.5 shrink-0 whitespace-nowrap pt-[3px] text-[15px] leading-none text-[#dcdcdc]">변수인지</span>
          <span className="-mr-1 mb-0.5 ml-[22px] w-9 shrink-0 border-b border-dotted border-[#ddd] text-[15px] leading-[21px] tracking-[0.300px] text-[#dcdcdc]">Imag</span>
        </div>
        <div className="flex h-[37px] shrink-0 items-center pl-[5px]">
          <Search text="검색 디테일" className="h-[22px] w-[319px]" />
          <div className={"ml-[11px] flex h-[28px] w-[34px] items-center justify-center rounded-sm " + SILVER}>
            <svg width="17" height="18" viewBox="0 0 17 18">
              <path d="M0 1.500h4M6 1.500h11M0 5.500h4M6 5.500h11M0 9.500h4M6 9.500h11M0 13.500h4M6 13.500h11M0 17h4M6 17h11" stroke="#777" strokeWidth="1.800" strokeDasharray="4 1" />
            </svg>
          </div>
          <svg width="22" height="14" viewBox="0 0 22 14" className="ml-[5px]">
            <path d="M0 7Q11-6 22 7 11 20 0 7z" fill="#d8d8d8" />
            <circle cx="11" cy="7" r="4.500" fill="#5f7296" />
            <circle cx="11" cy="7" r="1.800" fill="#dfe6f2" />
          </svg>
          <Caret className="ml-1 text-[#b5b5b5]" w={10} h={6} />
        </div>

        <div className="flex h-[271px] shrink-0 flex-col overflow-hidden rounded bg-[#3e3e3e]">
          <SectionHead title="슬롯 (Canvas Panel Slot)" />
          <PropRow label="앵커" expander="closed" h="h-[41px]">
            <div className={"-mt-px flex h-[33px] w-[136px] items-center justify-between rounded-[3px] px-[8px] text-[15px] leading-none text-black " + SILVER}>
              <span className="pt-0.5">앵커</span>
              <Caret className="text-black" w={11} h={6} />
            </div>
            <ResetArrow className="ml-[5px]" />
          </PropRow>
          {[["X 위치", "-393.0"], ["Y 위치", "-164.0"], ["X 크기", "63.0"], ["Y 크기", "63.0"]].map(([l, v]) => (
            <PropRow key={l} label={l} tag h="h-[27px]">
              <Spin value={v} className="w-[131px]" />
              <ResetArrow className="ml-2.5" />
            </PropRow>
          ))}
          <PropRow label="Alignment" expander="closed" tag h="h-[34px]">
            <Spin axis="X" value="0.0" className="w-[113px]" />
            <Spin axis="Y" value="0.0" className="ml-1 w-[113px]" />
          </PropRow>
          <PropRow label="Size To Content" tag h="h-[28px]">
            <div className="ml-px size-[18px] rounded-[3px] bg-[#acacac]" />
          </PropRow>
          <PropRow label="ZOrder" tag h="h-[30px]">
            <Spin value="0" className="w-[131px]" />
          </PropRow>
        </div>

        <div className="mt-0.5 flex h-[250px] shrink-0 flex-col overflow-hidden rounded-t bg-[#3e3e3e]">
          <SectionHead title="Appearance" />
          <PropRow label="Brush" expander="open" h="h-[30px]">
            <div className="size-[25px] bg-[#2d2b29]" />
            <ResetArrow className="ml-[116px]" />
            <div className={"ml-[5px] flex h-6 w-[66px] items-center justify-center gap-1 rounded-sm text-[14px] leading-none text-black " + SILVER}>
              <span className="whitespace-nowrap pt-[3px]">바인드</span>
              <Caret className="text-black" />
            </div>
          </PropRow>
          <PropRow label="Image" indent={1} h="h-[100px]">
            <div className="ml-1.5 mt-px size-20 shrink-0 border-b-4 border-[#c04040] bg-[#2f2d2b] shadow-[0_0_3px_2px_#222]" />
            <div className="ml-[9px] w-[135px] pt-px">
              <div className={"flex h-6 items-center justify-between rounded-[4px] bg-[#565656] pl-[3px] pr-[5px] text-[14px] leading-none tracking-[0.500px] text-[#e6e6e6] " + SHADOW}>
                <span>InventoryIcon</span>
                <Caret className="text-[#ccc]" />
              </div>
              <div className="flex h-7 items-center pl-2 pt-0.5">
                <svg width="16" height="14" viewBox="0 0 16 14"><path d="M0 7L8 0v4h7v6H8v4z" fill="#ddd" /></svg>
                <svg width="16" height="16" viewBox="0 0 16 16" className="ml-[13px]">
                  <circle cx="9" cy="6.500" r="5" fill="none" stroke="#a5a5a5" strokeWidth="2" />
                  <path d="M5.500 10.500L2 14" stroke="#a5a5a5" strokeWidth="3" />
                </svg>
                <ResetArrow className="ml-[11px]" />
              </div>
            </div>
            <ResetArrow className="ml-[5px]" />
          </PropRow>
          <PropRow label="Image Size" indent={1} expander="closed" h="h-[31px]">
            <Spin axis="X" value="63.0" className="w-[113px]" />
            <Spin axis="Y" value="56.0" className="ml-1 w-[113px]" />
          </PropRow>
          <PropRow label="Tint" indent={1} expander="closed" h="h-[27px]">
            <div className="h-[15px] w-[179px] bg-white" />
            <div className="ml-[3px] size-[18px] rounded-[3px] bg-[#acacac]" />
            <span className="ml-1 whitespace-nowrap pt-0.5 text-[14px] leading-none text-[#d5d5d5]">상속</span>
          </PropRow>
          <PropRow label="Draw As" indent={1} h="h-[32px]">
            <div className={"flex h-[25px] w-[130px] items-center justify-between rounded-sm px-2 text-[14px] leading-none tracking-[0.600px] text-black " + SILVER}>
              <span>Image</span>
              <Caret className="text-black" w={11} h={6} />
            </div>
          </PropRow>
          <div className="w-[138px] flex-1 border-r border-[#1c1c1c]" />
        </div>
        <div className="absolute left-[399px] top-[65px] h-[197px] w-[15px] rounded-sm border border-[#2a2a2a] bg-white" />
      </div>
    </div>
  );
}

/* ---------- animation & timeline ---------- */

function Animations() {
  return (
    <div className="flex w-[287px] shrink-0 flex-col">
      <div className="flex h-[27px] shrink-0 pl-1.5">
        <PanelTab
          label="애니메이션"
          icon={
            <svg width="20" height="20" viewBox="0 0 20 20">
              <path d="M0 12l5 5 5-4-2-3z" fill="#3a3a3a" />
              <path d="M8 10L13 3l5 4-4 8z" fill="#dfeaf6" />
              <path d="M7 11l6 5-6 1z" fill="#b3c6da" />
            </svg>
          }
        />
      </div>
      <div className="h-[238px] bg-[#606060] p-[3px]">
        <div className="flex h-full items-start rounded bg-[#3e3e3e] pl-[6px] pt-[5px]">
          <div className="flex h-[25px] w-[100px] items-center justify-center gap-[3px] rounded-sm border border-[#3e9a3e] bg-[#4fa64f]">
            <svg width="13" height="13" viewBox="0 0 13 13"><path d="M6.500 0.500v12M0.500 6.500h12" stroke="#fff" strokeWidth="3.200" /></svg>
            <span className="whitespace-nowrap pt-px text-[15px] font-bold leading-none tracking-[-0.100px] text-white [text-shadow:1px_1px_0_#222]">애니메이션</span>
          </div>
          <Search text="애니메이션 검색" className="ml-[3px] mt-px h-[23px] w-[166px]" />
        </div>
      </div>
    </div>
  );
}

const T0 = 57;
const TSTEP = 115.25;

function TickRow({ bottom = false }: { bottom?: boolean }) {
  const h = bottom ? 41 : 33;
  return (
    <div className={"relative shrink-0 overflow-hidden bg-[#333] " + (bottom ? "h-[41px]" : "h-[33px]")}>
      <div className="absolute left-0 top-0 h-full w-[58px] bg-[#222]" />
      <div className="absolute left-[632px] top-0 h-full w-[500px] bg-[#242424]" />
      <svg width="1130" height={h} className="absolute inset-0">
        {range(19).map((i) => {
          const x = Math.round(T0 + (i * TSTEP) / 2);
          const len = i % 2 ? 7 : 11;
          return <rect key={i} x={x} y={bottom ? 0 : h - len} width="1" height={len} fill={x > 632 ? "#666" : "#9a9a9a"} />;
        })}
        <rect x="632" y="0" width="1" height={h} fill="#8a1f1f" />
        <path d={bottom ? "M632 34v7h-7z" : "M632 0v7l-7-7z"} fill="#8a1f1f" />
        <path d={bottom ? "M50 40V7l8-7 8 7v33z" : "M50 1h16v24l-8 7-8-7z"} fill="#746462" stroke="#5a4846" />
        <rect x="58" y="0" width="1" height={h} fill="#6d8560" />
      </svg>
      {range(9, 1).map((i) => (
        <span
          key={i}
          className={"absolute whitespace-nowrap text-[14px] leading-none tracking-[0.500px] " + (bottom ? "top-[2px] " : "top-[19px] ") + (i > 4 ? "text-[#4e4e4e]" : "text-[#6a6a6a]")}
          style={{ left: T0 + i * TSTEP + 7 }}
        >
          {i + ".00 s"}
        </span>
      ))}
      <span className={"absolute left-[69px] text-[15px] leading-none tracking-[0.200px] text-[#a5a5a5] " + (bottom ? "bottom-[1px]" : "top-[3px]")}>0.00 s</span>
    </div>
  );
}

function TimelineTools() {
  return (
    <div className="flex h-10 shrink-0 items-center bg-[#414141] pb-px text-[#8a8a8a]">
      <svg width="26" height="28" viewBox="0 0 26 28" className="ml-[14px]">
        <path d="M7 6.500A9.500 9.500 0 1 1 6 20.500" fill="none" stroke="currentColor" strokeWidth="3.400" transform="translate(0 1)" />
        <path d="M1 2l2 11 10-4z" fill="currentColor" />
      </svg>
      <svg width="26" height="26" viewBox="0 0 26 26" className="ml-[20px] text-[#686868]">
        <path d="M1 10Q13-7 25 10 13 26 1 10z" fill="none" stroke="currentColor" strokeWidth="2.600" />
        <circle cx="13" cy="9.500" r="5.500" fill="currentColor" />
        <path d="M5 24h4M11 24h4M17 24h4" stroke="currentColor" strokeWidth="3" />
      </svg>
      <Caret className="ml-[3px] text-[#808080]" />
      <svg width="14" height="16" viewBox="0 0 14 16" className="ml-[28px]"><path d="M1 0l12 8-12 8z" fill="currentColor" /></svg>
      <Caret className="ml-[8px] text-[#808080]" />
      <svg width="17" height="17" className="ml-[25px]"><rect x="1.500" y="1.500" width="13" height="13" fill="none" stroke="currentColor" strokeWidth="1.600" strokeDasharray="3 1.500" /></svg>
      <Caret className="ml-[8px] text-[#808080]" />
      <Sep className="ml-[11px]" />
      <svg width="26" height="26" viewBox="0 0 26 26" className="ml-[13px]">
        <g fill="currentColor">
          <path d="M13 0l6 6.500h-3.500V9h-5V6.500H7zM13 26l6-6.500h-3.500V17h-5v2.500H7zM0 13l6.500-6v3.500H9v5H6.500V19zM26 13l-6.500-6v3.500H17v5h2.500V19z" />
        </g>
      </svg>
      <Sep className="ml-[13px]" />
      <div className="ml-[6px] flex h-[39px] w-10 items-center justify-center rounded-sm bg-[#927f76]">
        <svg width="22" height="26" viewBox="0 0 22 26">
          <path d="M4 18V10a7 7 0 0 1 14 0v8" fill="none" stroke="#9f9490" strokeWidth="6" />
          <path d="M1 22.500h6M15 22.500h6" stroke="#9f9490" strokeWidth="5" />
        </svg>
      </div>
      <Caret className="ml-[15px] text-[#808080]" />
      <Sep className="ml-[10px]" />
      <span className="ml-[14px] whitespace-nowrap text-[15.500px] leading-none tracking-[0.200px]">20 fps</span>
      <Caret className="ml-[1px] text-[#999]" />
      <Sep className="ml-[19px]" />
      <svg width="29" height="30" viewBox="0 0 29 30" className="ml-[11px]">
        <path d="M2 3l3 25M3 3c12 0 10 18 16 22 3 2 5 2 7 3M20 18l7 9" fill="none" stroke="currentColor" strokeWidth="1.800" />
        <path d="M20 0l9 5-9 5z" fill="currentColor" />
        <g fill="currentColor"><rect x="0" y="1" width="5" height="4" /><rect x="3" y="26" width="4" height="4" /><rect x="18" y="16" width="4" height="4" /><rect x="23" y="26" width="5" height="4" /></g>
      </svg>
      <svg width="18" height="18" viewBox="0 0 18 18" className="ml-[15px] text-[#7c7c7c]">
        <rect x="5" y="9" width="12.500" height="8" rx="1" fill="currentColor" />
        <path d="M1.500 9V4.500a3 3 0 0 1 6 0V9" fill="none" stroke="currentColor" strokeWidth="1.600" />
        <path d="M11.300 11v4" stroke="#333" strokeWidth="1.600" />
      </svg>
    </div>
  );
}

function Transport() {
  return (
    <svg width="316" height="30" viewBox="0 0 316 30" className="text-[#777]" fill="currentColor">
      <path d="M0 2h3l3 4-3 3v12l3 4-3 4H0z" />
      <path d="M19 15l11-10v20zM31 5h2.500v20H31zM35.500 5h3v20h-3zM40.500 5h3v20h-3z" />
      <path d="M49 15l11-10v20z" />
      <path d="M67.500 9.500L73 15l-5.500 5.500L62 15z" fill="none" stroke="currentColor" strokeWidth="2" />
      <path d="M83 15l11-10v20zM95.500 5h3v20h-3z" />
      <path d="M114 15l18-13v26zM168 15L150 2v26z" />
      <path d="M185 5h3v20h-3zM190 5l11 10-11 10z" />
      <path d="M215 9.500l5.500 5.500-5.500 5.500-5.500-5.500z" fill="none" stroke="currentColor" strokeWidth="2" />
      <path d="M223 5l11 10-11 10zM240 5h3v20h-3zM245 5h3v20h-3zM250 5h2.500v20H250zM253 5l11 10-11 10z" />
      <path d="M282 2h-3l-3 4 3 3v12l-3 4 3 4h3z" />
      <path d="M294 13.500h12V9.500l8 5.500-8 5.500v-4h-12z" />
    </svg>
  );
}

function Timeline() {
  return (
    <div className="ml-[7px] flex w-[1625px] shrink-0 flex-col">
      <div className="flex h-[27px] shrink-0 gap-px pl-[5px]">
        <PanelTab
          label="타임라인"
          icon={
            <svg width="20" height="18" viewBox="0 0 20 18">
              <path d="M1 4l17-3v4L1 8z" fill="#dfe8f6" />
              <path d="M4 3.500l3-.5-1 4-3 .5zM11 2l3-.5-1 4-3 .5z" fill="#4d6fae" />
              <path d="M2 9l15-1v8L4 18z" fill="#b9cdec" />
              <path d="M5 12h9v3H5z" fill="#5c82c4" />
            </svg>
          }
        />
        <PanelTab
          label="컴파일러 결과"
          className="bg-[#3a3a3a]"
          icon={
            <svg width="18" height="20" viewBox="0 0 18 20">
              <path d="M3 1h14l-2 17H1z" fill="#a9c0ea" />
              <path d="M4 2h12l-1.500 14H2.500z" fill="#6f90d2" />
              <path d="M5 4l6 5-7 5M9 15h5" fill="none" stroke="#1d2740" strokeWidth="2.200" />
              <path d="M4.500 3l6.500 5-7 5" fill="none" stroke="#fff" strokeWidth="1.600" />
            </svg>
          }
        />
      </div>
      <div className="flex h-[238px] flex-col bg-[#606060] px-0.5 pb-[3px] pt-[3px]">
        <TimelineTools />
        <div className="-mt-px flex min-h-0 flex-1">
          <div className="flex w-[486px] shrink-0 flex-col justify-between">
            <div className="flex h-[33px] items-center rounded-b bg-[#414141] pl-2">
              <div className="flex h-[25px] w-[74px] items-center justify-center gap-[5px] rounded-sm border border-[#6f8a6f] bg-[#718471] text-[#b0b0b0]">
                <svg width="12" height="12" viewBox="0 0 12 12"><path d="M6 0v12M0 6h12" stroke="currentColor" strokeWidth="2.600" /></svg>
                <span className="whitespace-nowrap pt-px text-[15px] leading-none [text-shadow:1px_1px_0_#333]">트랙</span>
                <Caret className="text-[#b8b8b8]" w={9} h={5} />
              </div>
              <div className="ml-[3px] flex h-[23px] w-[334px] items-center justify-between rounded-[3px] bg-[#7b7b7b] pl-1.5 text-[15px] leading-none text-[#5c5c5c]">
                <span className="pt-px">필터</span>
                <SearchIcon className="text-[#2c2c2c]" />
              </div>
              <span className="ml-3 whitespace-nowrap pt-px text-[15px] leading-none tracking-[0.350px] text-[#9c8880]">0.00 s</span>
            </div>
            <div className="flex h-[41px] items-center rounded bg-[#414141] pl-[85px]"><Transport /></div>
          </div>
          <div className="relative ml-[5px] flex flex-1 flex-col overflow-hidden">
            <TickRow />
            <div className="relative flex-1 border-b-2 border-[#4a4a4a] bg-[#414141]">
              <div className="absolute left-0 top-0 h-full w-[58px] bg-[#2c2c2c]" />
              <div className="absolute left-[633px] top-0 h-full w-[500px] bg-[#2c2c2c]" />
              <svg width="1130" height="118" className="absolute inset-0">
                {range(8, 1).map((i) => (
                  <rect key={i} x={Math.round(T0 + i * TSTEP)} y="0" width="1" height="118" fill={i > 4 ? "#252525" : "#383838"} />
                ))}
                <rect x="57" y="0" width="1" height="118" fill="#777" />
                <rect x="58" y="0" width="1" height="118" fill="#1f8f2a" />
                <rect x="632" y="0" width="1" height="118" fill="#8a1f1f" />
              </svg>
              <div className="absolute left-[165px] top-[28px] whitespace-nowrap text-[32px] font-light leading-none tracking-[-0.350px] text-[#e6e6e6] [text-shadow:2px_2px_0_#000]">선택된 애니메이션 없음</div>
            </div>
            <TickRow bottom />
          </div>
        </div>
      </div>
    </div>
  );
}

/* ---------- taskbar ---------- */

function Taskbar() {
  return (
    <div className="mt-auto flex h-[50px] shrink-0 bg-[#000308] text-white">
      <div className="flex w-[60px] items-center justify-center">
        <svg width="20" height="20" viewBox="0 0 20 20"><path d="M0 2.800L8.500 1.600V9.500H0zM9.500 1.500L20 0V9.500H9.500zM0 10.500h8.500v7.900L0 17.200zM9.500 10.500H20V20L9.500 18.500z" fill="#fff" /></svg>
      </div>
      <div className="flex w-[430px] items-center bg-[#333] pl-[10px] text-[18px] leading-none tracking-[0.100px] text-[#a8a8a8] font-['Open_Sans','Noto_Sans_CJK_KR',sans-serif]">Windows 검색</div>
      <div className="flex w-[60px] items-center justify-center">
        <svg width="24" height="20" viewBox="0 0 24 20" fill="none" stroke="#fff" strokeWidth="1.400">
          <rect x="4.500" y="1" width="15" height="18" />
          <path d="M3 4.500H1v12h2M21 4.500h2v12h-2" />
        </svg>
      </div>
      <div className="ml-[9px] flex w-[51px] items-center justify-center border-b-[3px] border-[#76b9ed] pr-px pt-[3px]">
        <svg width="28" height="28" viewBox="0 0 28 28">
          <circle cx="14" cy="14" r="13.800" fill="#fcc934" />
          <path d="M14 14L2 7A13.800 13.800 0 0 0 12.500 27.700L19 16z" fill="#1fa055" />
          <path d="M14 7.500h12.200A13.800 13.800 0 0 0 2 7l6 10z" fill="#dc4638" />
          <circle cx="14" cy="14" r="6.400" fill="#fff" />
          <circle cx="14" cy="14" r="5" fill="#4587f3" />
        </svg>
      </div>
      <div className="flex w-[70px] items-center justify-center">
        <svg width="28" height="24" viewBox="0 0 28 24">
          <path d="M0 0h13l2 2h13v20H0z" fill="#fce38c" />
          <path d="M0 0h13l1 3.500H0z" fill="#f6c32f" />
          <path d="M5 23V12h18v11h-4v-6H9v6z" fill="#3aaee6" />
        </svg>
      </div>
      <div className="ml-[10px] flex w-[34px] items-center justify-center">
        <svg width="29" height="30" viewBox="0 0 29 30">
          <path d="M9 10V6a5.500 5.500 0 0 1 11 0v4" fill="none" stroke="#fff" strokeWidth="2" />
          <rect y="8" width="29" height="22" fill="#fff" />
          <rect x="8" y="13" width="6" height="6" fill="#f05022" /><rect x="15" y="13" width="6" height="6" fill="#7fba00" />
          <rect x="8" y="20" width="6" height="6" fill="#02a4ef" /><rect x="15" y="20" width="6" height="6" fill="#ffb902" />
        </svg>
      </div>
      <div className="ml-[16px] flex w-[57px] items-center justify-center border-b-[3px] border-[#76b9ed] bg-[#35383d] pl-0.5 pt-[3px]">
        <div className="flex size-7 items-center justify-center rounded-full border border-[#ddd] bg-[#151515]"><UnrealMark size={22} /></div>
      </div>
      <div className="w-1 border-b-[3px] border-l border-b-[#5f96c2] border-l-[#111] bg-[#26282c]" />

      <div className="ml-auto flex items-center">
        <svg width="17" height="10" viewBox="0 0 17 10"><path d="M1 9l7.500-7.500L16 9" fill="none" stroke="#fff" strokeWidth="1.500" /></svg>
        <svg width="21" height="14" viewBox="0 0 21 14" className="ml-[11px]">
          <rect x="7" y="5" width="9.500" height="6" fill="#fff" />
          <path d="M4 8v5h14.500V2.500H6M20 6v4" fill="none" stroke="#fff" strokeWidth="1.300" />
          <path d="M1 1v3h4V1M3 4v4" fill="none" stroke="#fff" strokeWidth="1.400" />
        </svg>
        <svg width="21" height="14" viewBox="0 0 21 14" className="ml-[9px]">
          <path d="M4 13a3.500 3.500 0 0 1 0-7A5 5 0 0 1 13 3.500 4 4 0 0 1 17 7a3 3 0 0 1 0 6z" fill="#fff" />
          <path d="M7 12c0-4 4-5 6-3" fill="none" stroke="#000308" strokeWidth="1" />
        </svg>
        <svg width="21" height="18" viewBox="0 0 21 18" className="ml-[9px]" fill="none" strokeWidth="1.300">
          <path d="M1 6h3l4-4v14l-4-4H1z" stroke="#fff" />
          <path d="M11 7q1.500 2 0 4" stroke="#fff" />
          <path d="M14 5q3 4 0 8M17 2.500q5 6.500 0 13" stroke="#777" />
        </svg>
        <svg width="16" height="17" viewBox="0 0 16 17" className="ml-3" fill="none" stroke="#ddd" strokeWidth="1.300">
          <path d="M1 16Q1 2 15 1M4.500 16Q5 6 15 5M8 16q.5-6 7-7" />
          <rect x="12.500" y="13" width="2.500" height="2.500" fill="#fff" stroke="none" />
        </svg>
        <svg width="18" height="18" viewBox="0 0 18 18" className="ml-3">
          <circle cx="9" cy="9" r="9" fill="#8f8f8f" />
          <path d="M5 5l8 8M13 5l-8 8" stroke="#000308" strokeWidth="2" />
        </svg>
        <div className="ml-[18px] flex size-[18px] items-center justify-center bg-white text-[15px] leading-none text-black">한</div>
        <div className="ml-[22px] flex w-[76px] flex-col items-center text-[15px] leading-[23px] tracking-[-0.350px] font-['Open_Sans','Noto_Sans_CJK_KR',sans-serif]">
          <span className="whitespace-nowrap">오후 7:05</span>
          <span className="whitespace-nowrap">2019-01-20</span>
        </div>
        <div className="relative ml-[23px] h-[34px] w-[31px]">
          <svg width="20" height="20" viewBox="0 0 20 20" className="absolute left-0 top-1">
            <path d="M0 0h20v16H9l-4 4v-4H0z" fill="#fff" />
            <path d="M4 4h12M4 8h12M4 12h9" stroke="#000308" strokeWidth="1.200" />
          </svg>
          <div className="absolute left-[9px] top-[12px] flex size-[21px] items-center justify-center rounded-full border border-[#999] bg-[#25282c] text-[14px] font-bold leading-none">2</div>
        </div>
        <div className="ml-[14px] h-[50px] w-1.5 border-l border-[#555]" />
      </div>
    </div>
  );
}

export default function App() {
  return (
    <div className="flex h-[1080px] w-[1920px] flex-col overflow-hidden bg-[#222] font-['Roboto','Noto_Sans_CJK_KR',sans-serif]">
      <TitleBar />
      <MenuBar />
      <Toolbar />
      <div className="flex h-[623px] shrink-0 pt-1.5">
        <div className="flex w-[287px] shrink-0 flex-col">
          <Palette />
          <Hierarchy />
        </div>
        <Designer />
        <Details />
      </div>
      <div className="flex h-[272px] shrink-0 pt-1.5">
        <Animations />
        <Timeline />
      </div>
      <Taskbar />
    </div>
  );
}
